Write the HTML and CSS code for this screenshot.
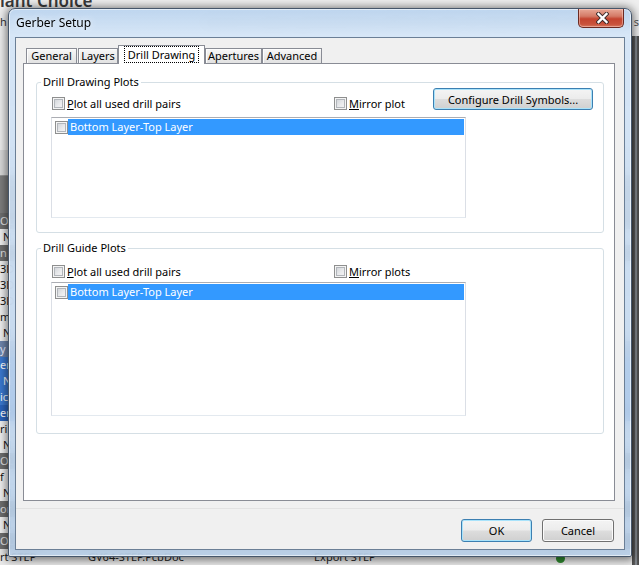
FILE: index.html
```html
<!DOCTYPE html>
<html>
<head>
<meta charset="utf-8">
<title>Gerber Setup</title>
<link rel="stylesheet" href="styles.css">
</head>
<body>
<div class="bgapp">
  <div class="bg-head">
    <div class="bg-h1">iant Choice</div>
    <div class="bg-desc"><span class="d1">h</span><span class="d2">source to outputs generated from within the view. For details of PCB configuration, s</span></div>
  </div>
  <div class="bg-body">
    <div class="bg-main">
      <div class="bg-pad"></div>
      <div class="bg-hdr"></div>
      <div class="bg-hdr2"></div>
      <div class="r g">Ou</div>
      <div class="r w i">N</div>
      <div class="r g">n</div>
      <div class="r w">3D</div>
      <div class="r w">3D</div>
      <div class="r w">3D</div>
      <div class="r w">m</div>
      <div class="r w i">N</div>
      <div class="r lb">y</div>
      <div class="r b">er</div>
      <div class="r b i">N</div>
      <div class="r b">ic</div>
      <div class="r db">er</div>
      <div class="r w">ri</div>
      <div class="r w i">N</div>
      <div class="r g">Ou</div>
      <div class="r w">f</div>
      <div class="r w i">N</div>
      <div class="r g">or</div>
      <div class="r w i">N</div>
      <div class="r g">Ou</div>
      <div class="r w last"><span class="c1">rt STEP</span><span class="c2">GV64-STEP.PcbDoc</span><span class="c3">Export STEP</span><span class="dot"></span></div>
    </div>
    <div class="bg-side"></div>
  </div>
</div>

<div class="dialog">
  <div class="titlebar">
    <span class="title">Gerber Setup</span>
    <button class="close" aria-label="Close">
      <svg width="13" height="12" viewBox="0 0 13 12">
        <path d="M2.5 2 L10.5 10 M10.5 2 L2.5 10" stroke="#3b2a2a" stroke-width="4.2" stroke-linecap="square" fill="none"/>
        <path d="M2.5 2 L10.5 10 M10.5 2 L2.5 10" stroke="#ffffff" stroke-width="2.4" stroke-linecap="square" fill="none"/>
      </svg>
    </button>
  </div>
  <div class="client">
    <div class="tabs">
      <div class="tab t-gen">General</div>
      <div class="tab t-lay">Layers</div>
      <div class="tab sel t-dd"><span class="focus">Drill Drawing</span></div>
      <div class="tab t-ap">Apertures</div>
      <div class="tab t-adv">Advanced</div>
    </div>
    <div class="panel">
      <fieldset class="group g1">
        <legend>Drill Drawing Plots</legend>
        <div class="gin">
          <div class="toprow">
            <label class="chk"><span class="box"></span><span><u>P</u>lot all used drill pairs</span></label>
            <label class="chk"><span class="box"></span><span><u>M</u>irror plot</span></label>
            <button class="btn def cfg">Configure Drill Symbols...</button>
          </div>
          <div class="listbox lb1">
            <div class="item"><span class="box"></span><span class="hl">Bottom Layer-Top Layer</span></div>
          </div>
        </div>
      </fieldset>
      <fieldset class="group g2">
        <legend>Drill Guide Plots</legend>
        <div class="gin">
          <div class="row2">
            <label class="chk"><span class="box"></span><span><u>P</u>lot all used drill pairs</span></label>
            <label class="chk"><span class="box"></span><span><u>M</u>irror plots</span></label>
          </div>
          <div class="listbox lb2">
            <div class="item"><span class="box"></span><span class="hl">Bottom Layer-Top Layer</span></div>
          </div>
        </div>
      </fieldset>
    </div>
    <div class="footer">
      <button class="btn def ok">OK</button>
      <button class="btn cancel">Cancel</button>
    </div>
  </div>
</div>
</body>
</html>
```

FILE: styles.css
```css
* { box-sizing: border-box; }
html, body { margin: 0; padding: 0; }
body {
  width: 639px;
  height: 565px;
  overflow: hidden;
  position: relative;
  font-family: "Noto Sans", "Open Sans", sans-serif;
  font-size: 11px;
  background: #f0f0f0;
  color: #000;
}

/* ---------- background application window ---------- */
.bgapp {
  position: absolute;
  left: 0; top: 0;
  width: 639px;
  height: 565px;
  display: flex;
  flex-direction: column;
  background: #efefef;
}
.bg-head { height: 36px; flex: none; }
.bg-h1 {
  font-size: 17px;
  font-weight: 600;
  color: #3a3a3a;
  line-height: 20px;
  margin-top: -9px;
  white-space: nowrap;
}
.bg-desc {
  font-size: 11px;
  line-height: 14px;
  color: #333;
  margin-top: 4px;
  white-space: nowrap;
  display: flex;
}
.d1 { width: 320px; }
.d2 { color: #555; }
.bg-body { flex: 1; display: flex; }
.bg-main { flex: 1; display: flex; flex-direction: column; }
.bg-pad { height: 114px; background: #eeeeee; }
.bg-hdr { height: 26px; background: #dadada; border-bottom: 1px solid #9a9a9a; }
.bg-hdr2 { height: 37px; background: #7e7e7e; }
.r {
  height: 16px;
  line-height: 16px;
  font-size: 11px;
  white-space: nowrap;
  padding-left: 0;
  display: flex;
}
.r.i { padding-left: 3px; }
.r.g { background: #6f6f6f; color: #e4e4e4; }
.r.w { background: #f1f1f1; color: #111; }
.r.lb { background: #6f86ad; color: #eef; }
.r.b { background: #3b79d0; color: #fff; }
.r.db { background: #2a64bd; color: #fff; }
.r.last { height: 17px; background: #e9e9e9; color: #222; }
.c1 { width: 88px; }
.c2 { width: 226px; }
.c3 { width: 240px; }
.dot {
  width: 9px; height: 9px; border-radius: 50%;
  background: #2f8a2f; margin-top: 5px; margin-left: 2px;
}
.bg-side {
  width: 7px;
  background: linear-gradient(to right, #4d4d4d 0, #5e5e5e 3px, #a9b3bf 4px, #5a5a5a 5px, #4a4a4a 100%);
}

/* ---------- dialog window ---------- */
.dialog {
  position: absolute;
  left: 8px;
  top: 8px;
  width: 624px;
  height: 549px;
  border: 1px solid #46566a;
  border-radius: 7px 7px 2px 2px;
  background: linear-gradient(to bottom, rgba(184,210,238,0.9) 0, rgba(212,229,247,0.92) 26px, rgba(182,206,232,0.88) 100%);
  -webkit-backdrop-filter: blur(6px);
  backdrop-filter: blur(6px);
  box-shadow: 0 1px 9px 2px rgba(0,0,0,0.5), inset 0 0 0 1px rgba(255,255,255,0.55);
  padding: 0 6px 6px 6px;
  display: flex;
  flex-direction: column;
}
.titlebar {
  height: 28px;
  flex: none;
  display: flex;
  justify-content: space-between;
  align-items: flex-start;
}
.title {
  font-size: 12px;
  line-height: 15px;
  padding-top: 6px;
  padding-left: 1px;
  color: #000;
  text-shadow: 0 0 6px rgba(255,255,255,0.9);
}
.close {
  width: 46px;
  height: 19px;
  margin-right: 1px;
  padding: 0;
  border: 1px solid #6b2a22;
  border-top: none;
  border-radius: 0 0 5px 5px;
  background: linear-gradient(to bottom, #e8a896 0, #d47a66 40%, #c4442f 55%, #c9533c 85%, #d87a62 100%);
  box-shadow: inset 0 0 0 1px rgba(255,220,210,0.45);
  display: flex;
  align-items: center;
  justify-content: center;
}
.close svg { display: block; margin-left: 2px; }

.client {
  flex: 1;
  background: #f0f0f0;
  border: 1px solid #6b7f96;
  display: flex;
  flex-direction: column;
  font-size: 11px;
}

/* tabs */
.tabs {
  height: 25px;
  padding-top: 7px;
  padding-left: 10px;
  margin-right: 9px;
  display: flex;
  align-items: flex-end;
  flex: none;
}
.tab {
  height: 15px;
  line-height: 13px;
  border: 1px solid #898c95;
  border-bottom: none;
  background: linear-gradient(to bottom, #f7f7f7 0, #ececec 50%, #e2e2e2 100%);
  box-shadow: inset 1px 1px 0 #fdfdfd;
  text-align: center;
  white-space: nowrap;
  color: #000;
}
.t-gen { width: 51px; margin-right: 1px; }
.t-lay { width: 40px; }
.t-dd { width: 87px; }
.t-ap { width: 57px; }
.t-adv { width: 60px; }
.tab.sel {
  height: 19px;
  margin-bottom: -1px;
  background: #ffffff;
  box-shadow: none;
  position: relative;
  z-index: 1;
  padding-top: 1px;
  line-height: 15px;
}
.focus {
  display: inline-block;
  outline: 1px dotted #000;
  outline-offset: 0;
  padding: 0 3px;
  line-height: 15px;
}

.panel {
  margin: 0 9px 0 7px;
  height: 438px;
  flex: none;
  border: 1px solid #898c95;
  background: #ffffff;
  padding: 12px 10px 0 12px;
}

.group {
  margin: 0;
  padding: 0 10px 14px 4px;
  border: 1px solid #d5dfe5;
  border-radius: 3px;
  min-width: 0;
}
.group legend {
  padding: 0 2px;
  line-height: 12px;
  font-size: 11px;
  color: #000;
}
.g2 { margin-top: 9px; padding-bottom: 17px; }
.gin { padding-left: 11px; }

.toprow {
  display: grid;
  grid-template-columns: 282px 99px 160px;
  height: 22px;
}
.toprow .chk { align-self: end; margin-bottom: -1px; }
.row2 {
  display: grid;
  grid-template-columns: 282px 99px;
  margin-top: 10px;
}

.chk {
  display: flex;
  align-items: center;
  height: 15px;
  line-height: 15px;
  white-space: nowrap;
}
.chk .box { margin-right: 2px; }
.chk u { text-decoration: underline; text-underline-offset: 1px; }

.box {
  display: inline-block;
  width: 13px;
  height: 13px;
  flex: none;
  border: 1px solid #8e8f8f;
  background: linear-gradient(135deg, #c9cdd2 0, #e9eaec 55%, #f8f8f8 100%);
  box-shadow: inset 0 0 0 1px #f4f4f4, inset 0 0 0 2px #b2b6bb;
}

.listbox {
  margin-left: -1px;
  width: 415px;
  background: #fff;
  border-style: solid;
  border-width: 1px;
  border-color: #abadb3 #dbdfe6 #e3e9ef #dbdfe6;
}
.lb1 { margin-top: 7px; height: 101px; }
.lb2 { margin-top: 3px; height: 134px; }
.item {
  margin-top: 1px;
  height: 16px;
  display: flex;
  align-items: center;
  padding-left: 3px;
}
.hl {
  flex: 1;
  margin-right: 1px;
  height: 16px;
  line-height: 16px;
  background: #3399ff;
  color: #fff;
  padding-left: 2px;
  white-space: nowrap;
}

/* buttons */
.btn {
  font-family: inherit;
  font-size: 11px;
  color: #000;
  height: 23px;
  padding: 0;
  border: 1px solid #707070;
  border-radius: 3px;
  background: linear-gradient(to bottom, #f4f4f4 0, #ececec 48%, #dddddd 52%, #d0d0d0 100%);
  box-shadow: inset 0 0 0 1px #fbfbfb;
  cursor: default;
}
.btn.def {
  border-color: #3c7fb1;
  box-shadow: inset 0 0 0 1px #a9e3fb;
}
.cfg { height: 22px; width: 160px; }

.footer {
  flex: 1;
  margin-top: 7px;
  border-top: 1px solid #e2e2e2;
  display: flex;
  justify-content: flex-end;
  align-items: flex-start;
  padding: 10px 10px 0 0;
  gap: 10px;
}
.ok { width: 71px; }
.cancel { width: 72px; }
```
